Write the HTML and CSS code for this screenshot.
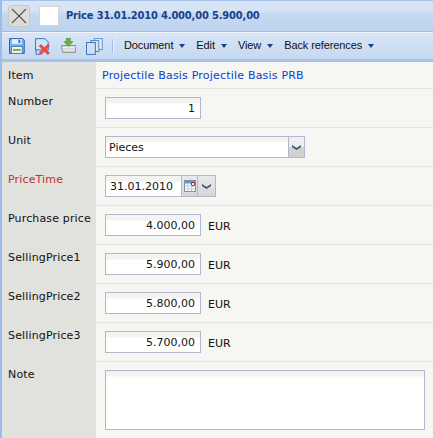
FILE: index.html
```html
<!DOCTYPE html>
<html lang="en">
<head>
<meta charset="utf-8">
<title>Price</title>
<link rel="stylesheet" href="styles.css">
</head>
<body>
<div class="window">
  <header class="titlebar">
    <button class="close-btn" aria-label="Close">
      <svg width="22" height="22" viewBox="0 0 22 22"><path d="M4 4L18 18M18 4L4 18" stroke="#555" stroke-width="1.1" fill="none"/></svg>
    </button>
    <span class="title-box"></span>
    <h1 class="title">Price 31.01.2010 4.000,00 5.900,00</h1>
  </header>
  <nav class="toolbar">
    <div class="tool-icons">
      <svg width="16" height="16" viewBox="0 0 16 16"><path d="M.5.500H14L15.500 2V15.500H.5Z" fill="#7fb0e6" stroke="#2a5ea8"/><rect x="3" y="1" width="10" height="5" fill="#e3eefa"/><rect x="9.500" y="1.500" width="2" height="3.500" fill="#3d74bd"/><rect x="2.500" y="8.500" width="11" height="7" fill="#f4f7ee" stroke="#4a7dc0"/><rect x="4" y="11" width="8" height="2" fill="#74b060"/></svg>
      <svg width="16" height="17" viewBox="0 0 16 17"><path d="M.5.500H10L13.500 4V12H.5Z" fill="#cfe2f6" stroke="#3d78bd"/><path d="M1 11V16.500H6" fill="none" stroke="#3d78bd"/><path d="M5 7L14 16M14 7L5 16" stroke="#ef4a4a" stroke-width="3.200"/></svg>
      <svg width="16" height="15" viewBox="0 0 16 15"><path d="M.5 7.500H15.500L14.500 14.500H1.500Z" fill="#d6d8d8" stroke="#8a9094"/><path d="M2 9.500H14M2.500 12H13.500" stroke="#fff" stroke-dasharray="1.500 1"/><path d="M5.500 0H9.500V3.500H12L7.500 8.500L3 3.500H5.500Z" fill="#6dae48" stroke="#4f8f37" stroke-width=".6"/></svg>
      <svg width="17" height="17" viewBox="0 0 17 17"><rect x="8.500" y=".5" width="8" height="11" fill="#e9f1fb" stroke="#5f8fcb"/><rect x="5" y="2.500" width="8" height="11" fill="#dbe8f8" stroke="#4a80c2"/><rect x=".5" y="4.500" width="9" height="12" fill="#cfe1f6" stroke="#3b74ba"/></svg>
    </div>
    <span class="tool-sep"></span>
    <ul class="menu">
      <li class="menu-item">Document<span class="caret"></span></li>
      <li class="menu-item">Edit<span class="caret"></span></li>
      <li class="menu-item">View<span class="caret"></span></li>
      <li class="menu-item">Back references<span class="caret"></span></li>
    </ul>
  </nav>
  <main class="form">
    <div class="row row-item">
      <div class="label">Item</div>
      <div class="field"><a class="link" href="#">Projectile Basis Projectile Basis PRB</a></div>
    </div>
    <div class="row">
      <div class="label">Number</div>
      <div class="field"><span class="input num">1</span></div>
    </div>
    <div class="row">
      <div class="label">Unit</div>
      <div class="field">
        <span class="input select"><span class="select-text">Pieces</span><span class="select-btn"><svg width="9" height="5" viewBox="0 0 9 5"><path d="M0 0L4.500 3L9 0V2L4.500 5L0 2Z" fill="#33518a"/></svg></span></span>
      </div>
    </div>
    <div class="row">
      <div class="label required">PriceTime</div>
      <div class="field">
        <span class="input date">31.01.2010</span><span class="date-btn cal"><svg width="12" height="12" viewBox="0 0 12 12"><rect x=".5" y=".5" width="11" height="11" fill="#fff" stroke="#7b93b8"/><rect x="1" y="1" width="10" height="2.500" fill="#6f8fbe"/><path d="M1 6H11M1 9H11M4 3.500V11M7.500 3.500V11" stroke="#c3cfe0"/><circle cx="9" cy="4" r="1.700" fill="#fff" stroke="#a02020"/></svg></span><span class="date-btn drop"><svg width="9" height="5" viewBox="0 0 9 5"><path d="M0 0L4.500 3L9 0V2L4.500 5L0 2Z" fill="#33518a"/></svg></span>
      </div>
    </div>
    <div class="row">
      <div class="label">Purchase price</div>
      <div class="field"><span class="input num">4.000,00</span><span class="unit">EUR</span></div>
    </div>
    <div class="row">
      <div class="label">SellingPrice1</div>
      <div class="field"><span class="input num">5.900,00</span><span class="unit">EUR</span></div>
    </div>
    <div class="row">
      <div class="label">SellingPrice2</div>
      <div class="field"><span class="input num">5.800,00</span><span class="unit">EUR</span></div>
    </div>
    <div class="row">
      <div class="label">SellingPrice3</div>
      <div class="field"><span class="input num">5.700,00</span><span class="unit">EUR</span></div>
    </div>
    <div class="row row-note">
      <div class="label">Note</div>
      <div class="field"><span class="input note"></span></div>
    </div>
  </main>
</div>
</body>
</html>
```
FILE: styles.css
```css
* { box-sizing: border-box; }
html, body { margin: 0; padding: 0; height: 100%; overflow: hidden; }
body { font-family: "DejaVu Sans", sans-serif; font-size: 11px; color: #111; background: #f6f6f2; }
.window { width: 433px; height: 438px; display: flex; flex-direction: column; border-left: 2px solid #9dbde9; overflow: hidden; }
.titlebar { height: 32px; margin-left: -2px; display: flex; align-items: center; padding: 0 0 1px 8px; border-top: 1px solid #a4c2ea; border-bottom: 1px solid #9dbde9; background: linear-gradient(#dae6f6 0, #d4e2f4 11px, #c6d9f2 12px, #bdd3ef 100%); }
.close-btn { width: 22px; height: 22px; padding: 0; border: 1px solid #c9c9c9; border-radius: 3px; background: #dcdcd8; display: flex; }
.close-btn svg { margin: -1px; }
.title-box { width: 20px; height: 20px; margin-left: 9px; background: #fff; border: 1px solid #d4d4d0; }
.title { margin: 0 0 0 7px; font-size: 11px; font-weight: bold; font-stretch: condensed; letter-spacing: -.15px; color: #15428b; white-space: nowrap; }
.toolbar { height: 30px; margin-left: -2px; display: flex; align-items: flex-start; padding: 5px 0 0 9px; border-top: 1px solid #f0f5fc; border-bottom: 3px solid #a6c2e8; background: linear-gradient(#d8e5f6, #c6d9f1); }
.tool-icons { display: flex; align-items: flex-start; gap: 10px; width: 94px; }
.tool-sep { height: 14px; margin: 1px 0 0 9px; background: #9dbde9; border-right: 1px solid #eef4fb; width: 2px; }
.menu { list-style: none; margin: 1px 0 0 10px; padding: 0; display: flex; gap: 11px; }
.menu-item { white-space: nowrap; font-family: "Liberation Sans", sans-serif; font-size: 11px; letter-spacing: -.1px; color: #111; }
.caret { display: inline-block; width: 0; height: 0; margin-left: 6px; vertical-align: 1px; border: 3px solid transparent; border-top: 4px solid #15428b; border-bottom: 0; }
.form { flex: 1; display: flex; flex-direction: column; }
.row { height: 39px; display: flex; flex: none; border-bottom: 1px solid #e4e4df; }
.row-item { height: 27px; }
.row-note { flex: 1; border-bottom: 0; }
.label { width: 94px; flex: none; padding: 6px 0 0 6px; margin-right: 2px; background: #e1e1dd; white-space: nowrap; letter-spacing: .15px; }
.row-item .label { padding-top: 7px; }
.required { color: #c23030; }
.field { flex: 1; padding: 8px 0 0 7px; display: flex; align-items: flex-start; }
.row-item .field { padding: 7px 0 0 4px; }
.link { color: #0b3fd0; text-decoration: none; white-space: nowrap; letter-spacing: .2px; }
.input { height: 22px; width: 96px; border: 1px solid #b4b6d0; background: linear-gradient(#f3f3f0 5px, #fff 6px); display: block; line-height: 21px; padding: 0 5px; color: #111; }
.num { text-align: right; }
.unit { margin: 6px 0 0 7px; }
.select { width: 200px; display: flex; padding: 0 0 0 3px; }
.select-text { flex: 1; }
.select-btn { width: 17px; margin: -1px -1px -1px 0; flex: none; display: flex; align-items: center; justify-content: center; border: 1px solid #b4b6d0; background: linear-gradient(#eee 50%, #d2d2d0 50%); }
.date { width: 76px; padding: 0 4px; border-right: 0; }
.date-btn { height: 22px; display: flex; align-items: center; justify-content: center; border: 1px solid #b4b6d0; background: linear-gradient(#eaeaea, #d6d6d4); }
.cal { width: 17px; }
.drop { width: 18px; border-left: 0; }
.note { width: 320px; height: 60px; }
```
